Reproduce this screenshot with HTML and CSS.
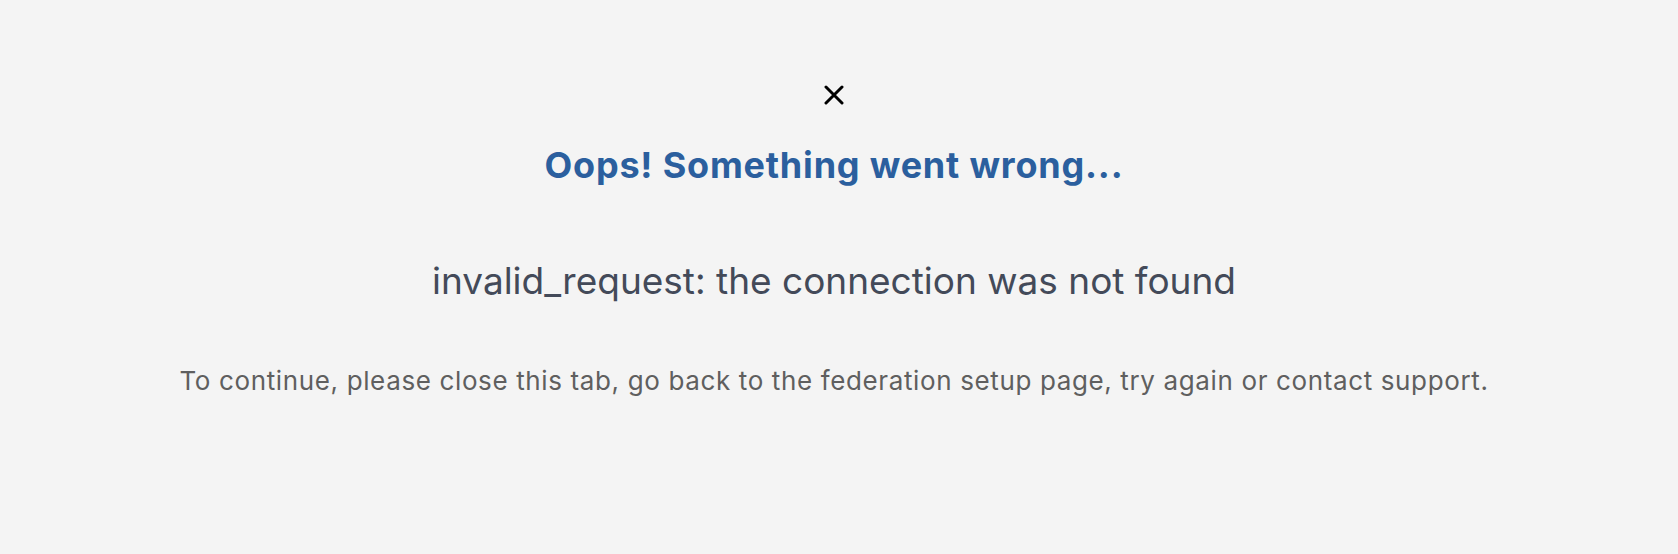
FILE: index.html
```html
<!DOCTYPE html>
<html lang="en">
<head>
<meta charset="utf-8">
<title>Error</title>
<link rel="stylesheet" href="styles.css">
</head>
<body>
<main class="page">
  <div class="icon">
    <svg width="20" height="20" viewBox="0 0 20 20" aria-hidden="true">
      <path d="M2 2 L18 18 M18 2 L2 18" stroke="#000" stroke-width="3" stroke-linecap="round" fill="none"/>
    </svg>
  </div>
  <h1 class="title">Oops! Something went wrong...</h1>
  <p class="error">invalid_request: the connection was not found</p>
  <p class="hint">To continue, please close this tab, go back to the federation setup page, try again or contact support.</p>
</main>
</body>
</html>
```
FILE: styles.css
```css
html, body {
  margin: 0;
  padding: 0;
  background: #f4f4f4;
  height: 100%;
}
body {
  font-family: Inter, "Noto Sans", "Liberation Sans", sans-serif;
}
.page {
  display: flex;
  flex-direction: column;
  align-items: center;
  padding: 85px 10px 0 0;
}
.icon {
  width: 20px;
  height: 20px;
  display: flex;
}
.title {
  margin: 38px 0 0;
  font-size: 36px;
  font-weight: 700;
  letter-spacing: 0.8px;
  color: #2b5f9e;
  line-height: 44px;
}
.error {
  margin: 72px 0 0;
  font-size: 37px;
  color: #434a59;
  line-height: 44px;
}
.hint {
  margin: 62px 0 0;
  font-size: 26px;
  letter-spacing: 0.63px;
  color: #5f5f5f;
  line-height: 32px;
}
```
